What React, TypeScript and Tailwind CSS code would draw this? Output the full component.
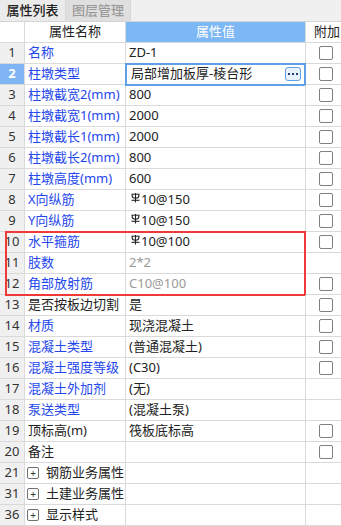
import React from "react";

type Row = {
  no: number;
  name: string;
  value?: string;
  rebar?: boolean;
  blue?: boolean;
  gray?: boolean;
  check?: boolean;
  group?: boolean;
  editing?: boolean;
};

const rows: Row[] = [
  { no: 1, name: "名称", value: "ZD-1", blue: true, check: true },
  { no: 2, name: "柱墩类型", value: "局部增加板厚-棱台形", blue: true, check: true, editing: true },
  { no: 3, name: "柱墩截宽2(mm)", value: "800", blue: true, check: true },
  { no: 4, name: "柱墩截宽1(mm)", value: "2000", blue: true, check: true },
  { no: 5, name: "柱墩截长1(mm)", value: "2000", blue: true, check: true },
  { no: 6, name: "柱墩截长2(mm)", value: "800", blue: true, check: true },
  { no: 7, name: "柱墩高度(mm)", value: "600", blue: true, check: true },
  { no: 8, name: "X向纵筋", value: "10@150", rebar: true, blue: true, check: true },
  { no: 9, name: "Y向纵筋", value: "10@150", rebar: true, blue: true, check: true },
  { no: 10, name: "水平箍筋", value: "10@100", rebar: true, blue: true, check: true },
  { no: 11, name: "肢数", value: "2*2", blue: true, gray: true },
  { no: 12, name: "角部放射筋", value: "C10@100", blue: true, gray: true, check: true },
  { no: 13, name: "是否按板边切割", value: "是", check: true },
  { no: 14, name: "材质", value: "现浇混凝土", blue: true, check: true },
  { no: 15, name: "混凝土类型", value: "(普通混凝土)", blue: true, check: true },
  { no: 16, name: "混凝土强度等级", value: "(C30)", blue: true, check: true },
  { no: 17, name: "混凝土外加剂", value: "(无)", blue: true },
  { no: 18, name: "泵送类型", value: "(混凝土泵)", blue: true },
  { no: 19, name: "顶标高(m)", value: "筏板底标高", check: true },
  { no: 20, name: "备注", value: "", check: true },
  { no: 21, name: "钢筋业务属性", group: true },
  { no: 31, name: "土建业务属性", group: true },
  { no: 36, name: "显示样式", group: true },
];

// HRB400 rebar grade mark
function RebarMark() {
  return (
    <svg width="9" height="10" viewBox="0 0 9 10" className="mr-[1px] -mt-[5px] shrink-0">
      <line x1="4.5" y1="0" x2="4.5" y2="9.5" stroke="#222" strokeWidth="1.1" />
      <path d="M1.2 1.2 L1.2 3 Q1.2 5.2 4.5 5.2 Q7.8 5.2 7.8 3 L7.8 1.2" fill="none" stroke="#222" strokeWidth="1.1" />
      <line x1="0.5" y1="1.2" x2="8.5" y2="1.2" stroke="#222" strokeWidth="1" />
      <line x1="0.5" y1="7.3" x2="8.5" y2="7.3" stroke="#222" strokeWidth="1.1" />
    </svg>
  );
}

function Checkbox() {
  return <div className="ml-[13px] h-[14px] w-[14px] rounded-[2px] border border-[#808080] bg-white" />;
}

function PlusBox() {
  return (
    <div className="flex h-[12px] w-[12px] items-center justify-center rounded-[2px] border border-[#707070] text-[10px] leading-none text-[#333]">
      +
    </div>
  );
}

function TableRow({ r }: { r: Row }) {
  const nameColor = r.blue ? "text-[#2447ee]" : "text-[#222]";
  return (
    <div className="flex h-[21px] border-b border-[#dadada]">
      <div
        className={
          r.editing
            ? "flex w-[25px] shrink-0 items-center justify-center border-r border-[#dadada] bg-[#7fb5f3] text-[13px] font-bold text-white"
            : "flex w-[25px] shrink-0 items-center justify-center border-r border-[#dadada] bg-[#f0f0f0] text-[13px] text-[#333]"
        }
      >
        {r.no}
      </div>
      {r.group ? (
        <>
          <div className="flex w-[101px] shrink-0 items-center border-r border-[#dadada] pl-[2px]">
            <PlusBox />
            <span className="ml-[7px] text-[13px] text-[#222]">{r.name}</span>
          </div>
          <div className="w-[180px] shrink-0 border-r border-[#dadada]" />
          <div className="w-[35px] shrink-0" />
        </>
      ) : (
        <>
          <div className={`flex w-[101px] shrink-0 items-center border-r border-[#dadada] pl-[3px] text-[13px] ${nameColor}`}>
            {r.name}
          </div>
          <div
            className={`relative flex w-[180px] shrink-0 items-center border-r border-[#dadada] pl-[3px] text-[13px] ${
              r.gray ? "text-[#9a9a9a]" : "text-[#222]"
            }`}
          >
            {r.rebar ? (
              <span className="flex items-center pl-[2px]">
                <RebarMark />
                {r.value}
              </span>
            ) : (
              <span className={r.editing ? "pl-[2px]" : ""}>{r.value}</span>
            )}
            {r.editing ? (
              <>
                <div className="absolute -left-[1px] -top-[1px] h-[23px] w-[181px] border-2 border-[#5e9fe6]" />
                <div className="absolute right-[4px] top-[3px] flex h-[14px] w-[16px] items-center justify-center gap-[2px] rounded-[3px] border border-[#5e9fe6] bg-[#e9f1fc]">
                  <span className="h-[2px] w-[2px] bg-[#1f3f7c]" />
                  <span className="h-[2px] w-[2px] bg-[#1f3f7c]" />
                  <span className="h-[2px] w-[2px] bg-[#1f3f7c]" />
                </div>
              </>
            ) : null}
          </div>
          <div className="flex w-[35px] shrink-0 items-center">{r.check ? <Checkbox /> : null}</div>
        </>
      )}
    </div>
  );
}

export default function App() {
  const before = rows.filter((r) => r.no < 10);
  const boxed = rows.filter((r) => r.no >= 10 && r.no <= 12);
  const after = rows.filter((r) => r.no > 12);

  return (
    <div
      className="h-[526px] w-[341px] overflow-hidden bg-white"
      style={{ fontFamily: '"Noto Sans", "Noto Sans CJK SC", sans-serif' }}
    >
      {/* tabs */}
      <div className="flex h-[22px] border-b border-[#d4d4d4] bg-[#f0f0f0]">
        <div className="flex w-[66px] items-center justify-center border-r border-[#d8d8d8] bg-[#ebebeb] text-[13px] font-medium text-[#222]">
          属性列表
        </div>
        <div className="flex w-[65px] items-center justify-center border-r border-[#d8d8d8] bg-[#dfdfdf] text-[13px] font-medium text-[#9a9a9a]">
          图层管理
        </div>
      </div>

      {/* header */}
      <div className="flex h-[21px] border-b border-[#dadada]">
        <div className="w-[25px] shrink-0 border-r border-[#dadada]" />
        <div className="flex w-[101px] shrink-0 items-center justify-center border-r border-[#dadada] text-[13px] text-[#222]">
          属性名称
        </div>
        <div className="flex w-[180px] shrink-0 items-center justify-center border-r border-[#dadada] bg-[#7db7f4] text-[13px] text-white">
          属性值
        </div>
        <div className="flex w-[35px] shrink-0 items-center whitespace-nowrap pl-[8px] text-[13px] text-[#222]">附加</div>
      </div>

      {before.map((r) => (
        <TableRow key={r.no} r={r} />
      ))}
      <div className="relative">
        {boxed.map((r) => (
          <TableRow key={r.no} r={r} />
        ))}
        <div className="absolute -top-[1px] left-[5px] h-[65px] w-[301px] border-2 border-[#f03a3a]" />
      </div>
      {after.map((r) => (
        <TableRow key={r.no} r={r} />
      ))}
    </div>
  );
}
